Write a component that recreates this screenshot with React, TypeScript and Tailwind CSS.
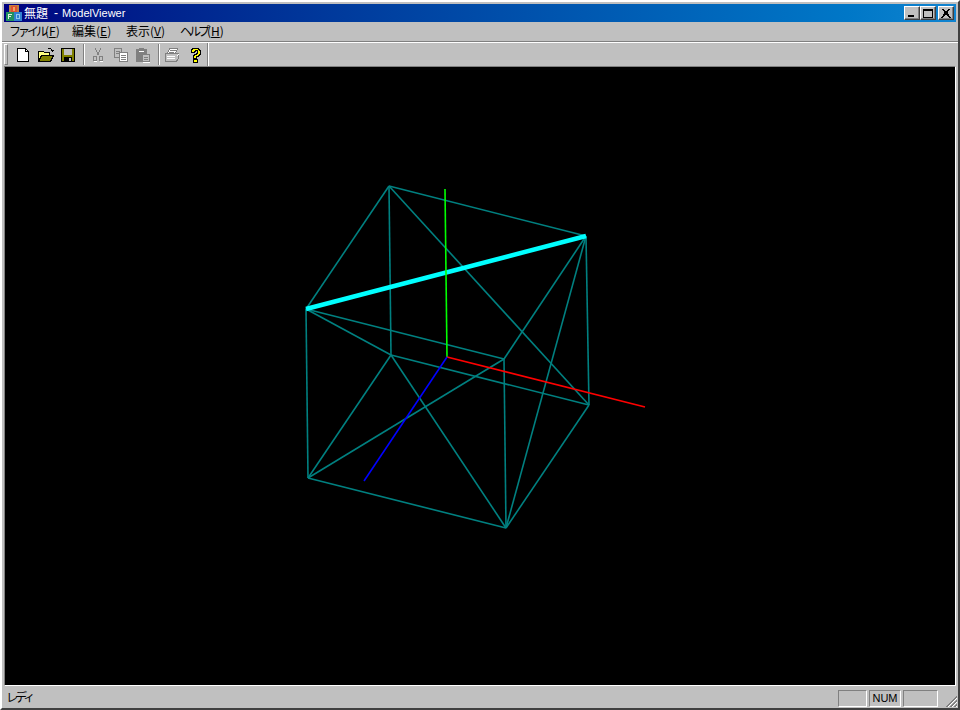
const uiFont = "font-['Noto_Sans_CJK_JP','Liberation_Sans',sans-serif]"

const edges = [
  [389, 186, 586, 236],
  [389, 186, 306, 309],
  [389, 186, 391, 355],
  [389, 186, 589, 405],
  [586, 236, 589, 405],
  [586, 236, 504, 359],
  [586, 236, 506, 528],
  [306, 309, 504, 359],
  [306, 309, 391, 355],
  [306, 309, 308, 478],
  [391, 355, 589, 405],
  [391, 355, 308, 478],
  [391, 355, 506, 528],
  [504, 359, 506, 528],
  [504, 359, 308, 478],
  [589, 405, 506, 528],
  [308, 478, 506, 528],
]

function Raised({ children }: { children: React.ReactNode }) {
  return (
    <div className="w-4 h-[14px] bg-[#c0c0c0] border border-t-white border-l-white border-r-[#404040] border-b-[#404040] shadow-[inset_-1px_-1px_0_#808080] flex items-center justify-center">
      {children}
    </div>
  )
}

function AppIcon() {
  return (
    <svg width="16" height="16" viewBox="0 0 16 16" shapeRendering="crispEdges" className="shrink-0">
      <rect x="3" y="0" width="10" height="8" fill="#c08040" />
      <rect x="5" y="1" width="6" height="6" fill="#e05030" />
      <rect x="7" y="2" width="2" height="4" fill="#f0a060" />
      <rect x="0" y="7" width="8" height="9" fill="#209060" />
      <rect x="2" y="9" width="4" height="1" fill="#e0f0e0" />
      <rect x="2" y="9" width="1" height="5" fill="#e0f0e0" />
      <rect x="2" y="11" width="3" height="1" fill="#e0f0e0" />
      <rect x="8" y="7" width="8" height="9" fill="#3080d0" />
      <rect x="10" y="9" width="4" height="5" fill="#90c8f0" />
      <rect x="11" y="10" width="2" height="3" fill="#3080d0" />
    </svg>
  )
}

function NewIcon() {
  return (
    <svg width="16" height="16" viewBox="0 0 16 16" shapeRendering="crispEdges">
      <path d="M2.500 1.500h8l3 3v10h-11z" fill="#fff" stroke="#000" />
      <path d="M10.500 1.500v3h3" fill="none" stroke="#000" />
    </svg>
  )
}

function OpenIcon() {
  return (
    <svg width="16" height="16" viewBox="0 0 16 16" shapeRendering="crispEdges">
      <path d="M1 5h5l1 1h5v2H4l-2 5H1z" fill="#ffff80" />
      <path d="M0.500 14.500v-10h5l1 1h5v3" fill="none" stroke="#000" />
      <path d="M0.500 14.500l3-6h12l-3 6z" fill="#808000" stroke="#000" />
      <path d="M9.500 2.500l1-1h2l1.500 1.500" fill="none" stroke="#000" />
      <path d="M13 3h3l-1.500 2z" fill="#000" />
    </svg>
  )
}

function SaveIcon() {
  return (
    <svg width="16" height="16" viewBox="0 0 16 16" shapeRendering="crispEdges">
      <rect x="1" y="1" width="14" height="14" fill="#000" />
      <rect x="2" y="2" width="12" height="12" fill="#808000" />
      <rect x="4" y="2" width="8" height="6" fill="#c0c0c0" />
      <rect x="4" y="10" width="8" height="4" fill="#000" />
      <rect x="9" y="11" width="2" height="3" fill="#c0c0c0" />
    </svg>
  )
}

function CutIcon() {
  return (
    <svg width="16" height="16" viewBox="0 0 16 16" shapeRendering="crispEdges">
      <path d="M5.500 1.500l3 7M10.500 1.500l-3 7" fill="none" stroke="#808080" />
      <rect x="3.500" y="9.500" width="3" height="4" fill="none" stroke="#808080" />
      <rect x="9.500" y="9.500" width="3" height="4" fill="none" stroke="#808080" />
      <path d="M4 14.500h3M10 14.500h3" stroke="#fff" />
    </svg>
  )
}

function CopyIcon() {
  return (
    <svg width="16" height="16" viewBox="0 0 16 16" shapeRendering="crispEdges">
      <rect x="1.500" y="1.500" width="7" height="9" fill="#c0c0c0" stroke="#808080" />
      <path d="M3 4.500h4M3 6.500h4" stroke="#808080" />
      <rect x="6.500" y="5.500" width="8" height="9" fill="#fff" stroke="#808080" />
      <path d="M8 8.500h5M8 10.500h5M8 12.500h5" stroke="#808080" />
    </svg>
  )
}

function PasteIcon() {
  return (
    <svg width="16" height="16" viewBox="0 0 16 16" shapeRendering="crispEdges">
      <rect x="1" y="2" width="11" height="13" fill="#808080" />
      <rect x="4" y="1" width="5" height="2" fill="#808080" />
      <rect x="4" y="4" width="5" height="1" fill="#fff" />
      <rect x="7.500" y="7.500" width="7" height="7" fill="#c0c0c0" stroke="#808080" />
      <path d="M9 10.500h4M9 12.500h4" stroke="#808080" />
      <path d="M8 15.500h7" stroke="#fff" />
    </svg>
  )
}

function PrintIcon() {
  return (
    <svg width="16" height="16" viewBox="0 0 16 16" shapeRendering="crispEdges">
      <path d="M5.500 1.500h8l-2 5h-8z" fill="#fff" stroke="#808080" />
      <path d="M5.500 3.500h6M5 5.500h5" stroke="#808080" />
      <path d="M1.500 6.500h13v5l-2 2.500h-11z" fill="#c0c0c0" stroke="#808080" />
      <path d="M3 9.500h8M3 11.500h8" stroke="#fff" />
      <path d="M12.500 9.500l2-2" stroke="#fff" />
    </svg>
  )
}

function HelpIcon() {
  return (
    <svg width="16" height="16" viewBox="0 0 16 16" shapeRendering="crispEdges">
      <path d="M5 1h6v1h1v1h1v4h-1v1h-1v1h-2v2h-3v-3h1v-1h2v-1h1v-3h-2v1h-1v1h-3v-3h1z" fill="#ffff00" stroke="#000" strokeWidth="1" />
      <rect x="6" y="12" width="4" height="3" fill="#ffff00" stroke="#000" />
    </svg>
  )
}

function Menu({ label, hot, width, kana }: { label: string; hot: string; width: string; kana?: boolean }) {
  return (
    <span className={`${width} whitespace-nowrap`}>
      <span className={kana ? "tracking-[-3px]" : ""}>{label}</span>
      <span>(<span className="underline">{hot}</span>)</span>
    </span>
  )
}

function Sep() {
  return <div className="w-[2px] h-[21px] border-l border-l-[#808080] border-r border-r-white" />
}

export default function App() {
  return (
    <div className={`w-[960px] h-[710px] bg-[#c0c0c0] flex flex-col overflow-hidden border-t-2 border-l-2 border-t-white border-l-white border-r-2 border-b-2 border-r-[#404040] border-b-[#404040] ${uiFont} text-[12px] leading-none text-black`}>
      <div className="mx-[2px] mt-[2px] h-[18px] shrink-0 flex items-center bg-gradient-to-r from-[#000080] to-[#1084d0] text-white">
        <div className="ml-[2px] mr-[2px]"><AppIcon /></div>
        <span>無題</span>
        <span className="ml-[6px] w-[8px] font-['Liberation_Sans',sans-serif]">-</span>
        <span className="font-['Liberation_Sans',sans-serif] text-[11px]">ModelViewer</span>
        <div className="ml-auto mr-[2px] flex">
          <Raised>
            <div className="w-[6px] h-[2px] bg-black mt-[6px] mr-[2px]" />
          </Raised>
          <div className="mr-[2px]">
            <Raised>
              <div className="w-[10px] h-[9px] border border-black border-t-2" />
            </Raised>
          </div>
          <Raised>
            <svg width="10" height="9" viewBox="0 0 10 9" shapeRendering="crispEdges">
              <path d="M1 0l8 9M9 0l-8 9M2 0l8 9M8 0l-8 9" stroke="#000" strokeWidth="1" />
            </svg>
          </Raised>
        </div>
      </div>

      <div className="h-[19px] shrink-0 flex items-center pl-[7px] pb-[2px]">
        <Menu label="ファイル" hot="F" width="w-[63px]" kana />
        <Menu label="編集" hot="E" width="w-[54px]" />
        <Menu label="表示" hot="V" width="w-[54px]" />
        <Menu label="ヘルプ" hot="H" width="w-[44px]" kana />
      </div>

      <div className="h-[2px] shrink-0 border-t border-t-[#808080] border-b border-b-white" />

      <div className="h-[23px] shrink-0 flex items-center">
        <div className="ml-[2px] mr-[7px] w-[4px] h-[21px] border border-t-white border-l-white border-r-[#808080] border-b-[#808080]" />
        <div className="flex items-center">
          <div className="mr-[7px]"><NewIcon /></div>
          <div className="mr-[6px]"><OpenIcon /></div>
          <div className="mr-[7px]"><SaveIcon /></div>
          <Sep />
          <div className="ml-[5px] mr-[7px]"><CutIcon /></div>
          <div className="mr-[6px]"><CopyIcon /></div>
          <div className="mr-[7px]"><PasteIcon /></div>
          <Sep />
          <div className="ml-[4px] mr-[7px]"><PrintIcon /></div>
          <div className="mr-[4px]"><HelpIcon /></div>
          <div className="w-[2px] h-[23px] border-l border-l-[#808080] border-r border-r-white" />
        </div>
      </div>

      <div className="mx-[2px] flex-1 min-h-0 bg-black border-t border-t-[#808080] border-l border-l-[#808080] border-r border-r-white border-b border-b-white">
        <svg width="950" height="617" viewBox="5 67 950 617" className="block">
          {edges.map(([x1, y1, x2, y2], i) => (
            <line key={i} x1={x1} y1={y1} x2={x2} y2={y2} stroke="#008080" strokeWidth="1.6" />
          ))}
          <line x1="306" y1="309" x2="586" y2="236" stroke="#00ffff" strokeWidth="4.5" />
          <line x1="447" y1="357" x2="445" y2="189" stroke="#00ff00" strokeWidth="1.6" />
          <line x1="447" y1="357" x2="645" y2="407" stroke="#ff0000" strokeWidth="1.6" />
          <line x1="447" y1="357" x2="364" y2="481" stroke="#0000ff" strokeWidth="1.6" />
        </svg>
      </div>

      <div className="h-[22px] shrink-0 flex items-center pt-[2px]">
        <span className="ml-[4px] flex-1 tracking-[-3px] -translate-y-px">レディ</span>
        <div className="w-[29px] h-[17px] border border-t-[#808080] border-l-[#808080] border-r-white border-b-white mr-[2px]" />
        <div className="w-[32px] h-[17px] border border-t-[#808080] border-l-[#808080] border-r-white border-b-white mr-[2px] flex items-center justify-center font-['Liberation_Sans',sans-serif] text-[11px]">NUM</div>
        <div className="w-[35px] h-[17px] border border-t-[#808080] border-l-[#808080] border-r-white border-b-white" />
        <svg width="20" height="17" viewBox="0 0 20 17" shapeRendering="crispEdges" className="self-end">
          <path d="M19 5l-11 11M19 6l-10 10M19 9l-7 7M19 10l-6 6M19 13l-3 3M19 14l-2 2" stroke="#808080" />
          <path d="M19 7l-9 9M19 11l-5 5M19 15l-1 1" stroke="#fff" />
        </svg>
      </div>
    </div>
  )
}
